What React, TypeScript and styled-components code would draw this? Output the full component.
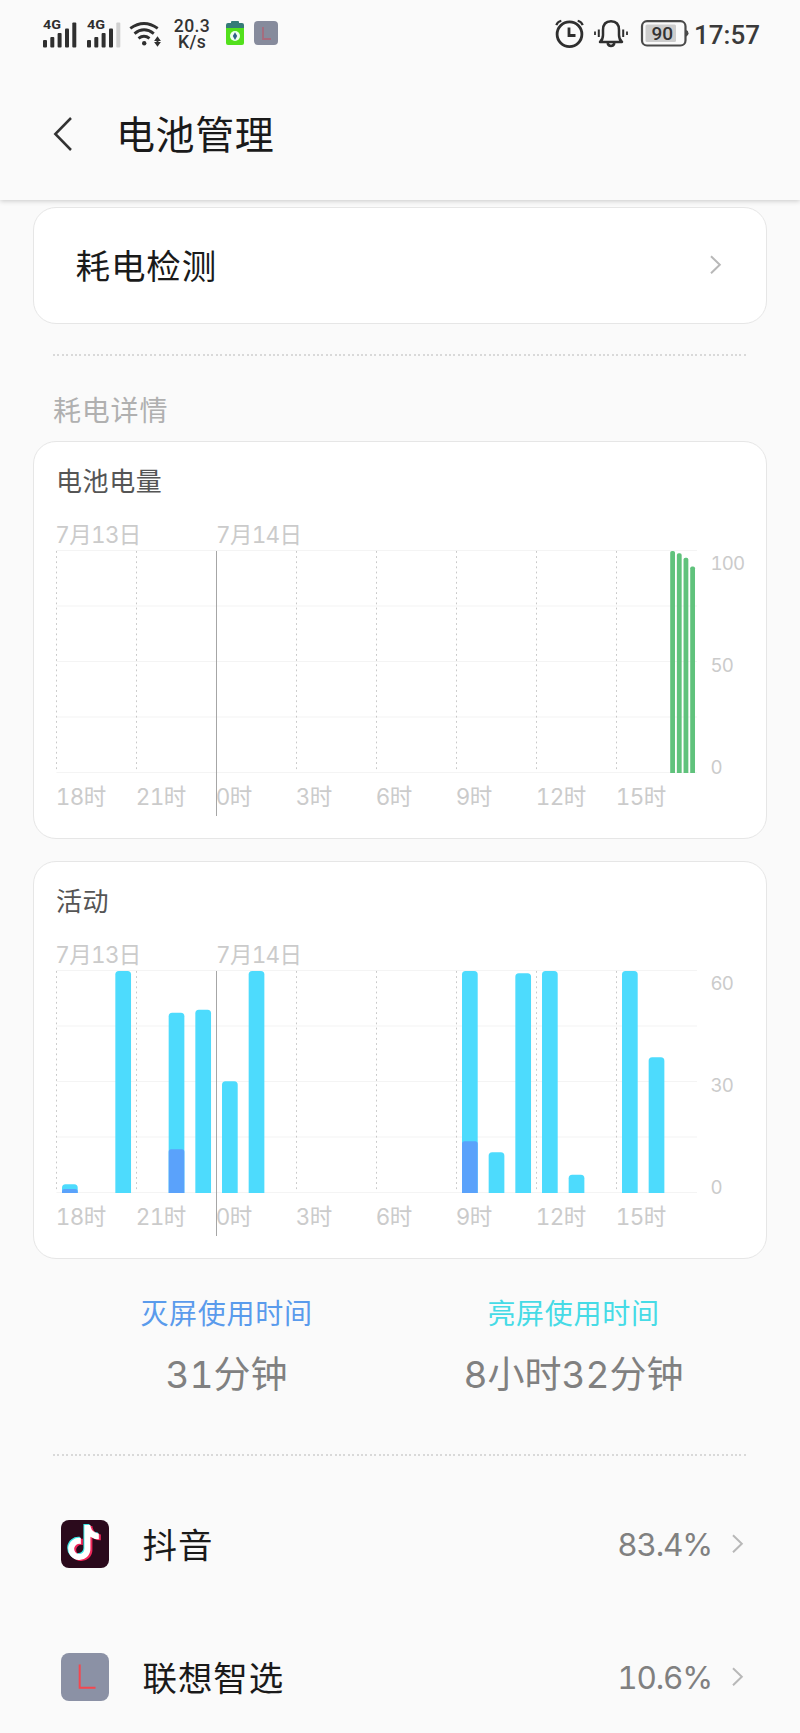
import React from 'react';
import styled, { createGlobalStyle, css } from 'styled-components';
import { FaTiktok } from 'react-icons/fa';

const GlobalStyle = createGlobalStyle`
  html, body { margin: 0; padding: 0; background: #fafafa; }
  * { box-sizing: border-box; }
  svg { display: block; flex: none; }
`;

const uiFont = css`
  font-family: Inter, 'Noto Sans CJK SC', sans-serif;
  font-feature-settings: 'tnum' 1;
`;

const Screen = styled.div`
  ${uiFont}
  width: 800px;
  height: 1733px;
  overflow: hidden;
  background: #fafafa;
  color: #1a1a1a;
`;

const TopArea = styled.header`
  height: 200px;
  background: #fafafa;
  box-shadow: 0 1px 5px rgba(0, 0, 0, 0.2);
`;

const StatusBar = styled.div`
  display: flex;
  align-items: flex-start;
  justify-content: space-between;
  height: 68px;
  padding: 0 40px 0 42px;
  font-family: Roboto, sans-serif;
  color: #333;
`;

const StatusGroup = styled.div`
  display: flex;
  align-items: flex-start;
`;

const NetSpeed = styled.div`
  display: flex;
  flex-direction: column;
  align-items: center;
  width: 40px;
  margin: 17.5px 13px 0 9px;
  font-size: 17.6px;
  font-weight: 500;
  line-height: 16.5px;
  letter-spacing: 0.4px;
`;

const Clock = styled.div`
  margin-top: 19.5px;
  font-size: 26px;
  font-weight: 500;
  line-height: 30px;
  color: #3a3a3a;
`;

const TitleBar = styled.div`
  display: flex;
  align-items: center;
  height: 132px;
  padding: 0 0 0 53px;
`;

const PageTitle = styled.h1`
  margin: 5px 0 3px 44px;
  font-size: 39px;
  font-weight: 400;
  line-height: 56px;
  letter-spacing: 0.6px;
`;

const BackIcon = styled.svg`
  margin-bottom: 1px;
`;

const Card = styled.section<{ $top: number; $height: number }>`
  width: 734px;
  height: ${(p) => p.$height}px;
  margin: ${(p) => p.$top}px 33px 0;
  background: #fff;
  border: 1px solid #e6e6e6;
  border-radius: 23px;
`;

const LinkCard = styled(Card)`
  display: flex;
  align-items: center;
  justify-content: space-between;
  padding: 0 44px 2px 41.5px;
`;

const LinkLabel = styled.span`
  padding-top: 4px;
  font-size: 34.5px;
  line-height: 48px;
  letter-spacing: 0.9px;
`;

const Divider = styled.div<{ $top: number }>`
  height: 2px;
  margin: ${(p) => p.$top}px 54px 0 53px;
  background: repeating-linear-gradient(90deg, #d9d9d9 0 2px, transparent 2px 4.4px);
`;

const SectionLabel = styled.h2`
  margin: 34px 0 0 53px;
  font-size: 28px;
  font-weight: 400;
  line-height: 42px;
  letter-spacing: 0.8px;
  color: #b0b0b0;
`;

const CardTitle = styled.h3`
  height: 78px;
  margin: 0;
  padding-left: 22px;
  font-size: 26px;
  font-weight: 400;
  line-height: 79px;
  letter-spacing: 0.6px;
  color: #555;
`;

const ChartSvg = styled.svg`
  ${uiFont}
  .label { font-size: 22.5px; fill: #cbcbcb; }
  .value { font-size: 18.7px; letter-spacing: -0.9px; fill: #cbcbcb; }
`;

const Usage = styled.section`
  display: flex;
  height: 195px;
  padding: 34px 53px 0;
`;

const UsageItem = styled.div`
  flex: 1;
  text-align: center;
`;

const UsageLabel = styled.div<{ $color: string }>`
  font-size: 28px;
  line-height: 42px;
  letter-spacing: 0.7px;
  color: ${(p) => p.$color};
`;

const UsageValue = styled.div`
  margin-top: 12px;
  font-size: 37px;
  line-height: 56px;
  color: #808080;
`;

const AppList = styled.section`
  padding-top: 21px;
`;

const AppRow = styled.div`
  display: flex;
  align-items: center;
  height: 133.3px;
  padding: 0 56px 0 60.5px;
`;

const AppIcon = styled.div<{ $bg: string }>`
  position: relative;
  width: 48px;
  height: 48px;
  border-radius: 8px;
  background: ${(p) => p.$bg};
  overflow: hidden;
`;

const NoteLayer = styled(FaTiktok)<{ $x: number; $y: number; $tint: string }>`
  position: absolute;
  left: ${(p) => p.$x}px;
  top: ${(p) => p.$y}px;
  width: 31px;
  height: 35px;
  color: ${(p) => p.$tint};
`;

const AppName = styled(LinkLabel)`
  flex: 1;
  margin-left: 34px;
`;

const Percent = styled.span`
  margin-right: 19px;
  padding-top: 3px;
  font-size: 31.5px;
  line-height: 44px;
  letter-spacing: -1.2px;
  color: #808080;
`;

const Chevron = () => (
  <svg width="13" height="22" viewBox="0 0 13 22" fill="none" stroke="#b8b8b8" strokeWidth="2">
    <path d="M2 2.2 L10.8 10.7 L2 19.2" />
  </svg>
);

const Signal = ({ weak }: { weak?: boolean }) => (
  <svg width="43.5" height="68" viewBox="0 0 43.5 68" fill="#2f2f2f">
    <text x="1" y="29" fontSize="12.5" fontWeight="700" textLength="18" lengthAdjust="spacingAndGlyphs">4G</text>
    <rect x="1" y="40" width="4" height="7.5" rx="1" />
    <rect x="8.3" y="37" width="4" height="10.5" rx="1" />
    <rect x="15.6" y="33" width="4" height="14.5" rx="1" />
    <rect x="23" y="28.5" width="4" height="19" rx="1" />
    <rect x="30.3" y="22.5" width="4" height="25" rx="1" fill={weak ? '#d0d0d0' : undefined} />
  </svg>
);

const Wifi = () => (
  <svg width="34" height="68" viewBox="128.5 0 34 68" fill="none" stroke="#2f2f2f" strokeWidth="2.9">
    <path d="M129.8 28.4 Q143.5 18.6 157.2 28.4" />
    <path d="M134 33.6 Q143.5 26 153.3 33.6" />
    <path d="M138 38.4 Q143.5 34.2 149 38.4" />
    <circle cx="143.7" cy="43.2" r="2.2" fill="#2f2f2f" stroke="none" />
    <path d="M153.6 40.9 L157 36.2 L160.4 40.9 Z M153.6 42 L157 46.7 L160.4 42 Z" fill="#2f2f2f" stroke="none" />
    <path d="M157 39 V44" strokeWidth="2" />
  </svg>
);

const BatterySaver = () => (
  <svg width="20" height="68" viewBox="0 0 20 68">
    <rect x="6" y="21" width="8" height="5" rx="1" fill="#347b77" />
    <rect x="1" y="23" width="18" height="8" rx="2" fill="#347b77" />
    <path d="M1 28 H19 V43 Q19 45 17 45 H3 Q1 45 1 43 Z" fill="#52e01c" />
    <circle cx="10" cy="36" r="5" fill="#eefff0" />
    <path d="M10 32.3 L7.8 36.1 L10 39.9 L12.2 36.1 Z" fill="#31608b" />
  </svg>
);

const LauncherMini = () => (
  <svg width="24" height="68" viewBox="0 0 24 68">
    <rect x="0" y="21" width="24" height="24" rx="4" fill="#868b9c" />
    <path d="M9 27 V39 H17" fill="none" stroke="#a86a7c" strokeWidth="1.8" />
  </svg>
);

const Alarm = () => (
  <svg width="30" height="68" viewBox="554 0 30 68" fill="none" stroke="#2f2f2f" strokeWidth="2.8">
    <circle cx="569.5" cy="34.3" r="12.4" />
    <path d="M569 27.5 V35.5 H575.5" />
    <path d="M556.3 25.2 Q557.5 21.7 561.3 20.8 M577.7 20.8 Q581.5 21.7 582.7 25.2" strokeWidth="2.2" />
  </svg>
);

const Bell = () => (
  <svg width="36" height="68" viewBox="593 0 36 68" fill="none" stroke="#2f2f2f" strokeWidth="2.5">
    <path d="M600 42 Q603 39.5 603 35 V30 Q603 21.2 611 21.2 Q619 21.2 619 30 V35 Q619 39.5 622 42 Z" strokeLinejoin="round" />
    <path d="M607.5 43 Q608.5 46 611 46 Q613.5 46 614.5 43" />
    <path d="M598.8 29.5 V37 M623.2 29.5 V37" strokeWidth="2" />
    <path d="M595 31.5 V35 M627 31.5 V35" strokeWidth="1.8" />
  </svg>
);

const Battery = () => (
  <svg width="49" height="68" viewBox="640 0 49 68">
    <rect x="642" y="21.2" width="43.5" height="24.3" rx="5" fill="none" stroke="#4a4a4a" strokeWidth="2.2" />
    <path d="M686 30 Q688.5 30.5 688.5 33.3 Q688.5 36 686 36.8 Z" fill="#4a4a4a" />
    <rect x="645.5" y="24.5" width="30.5" height="17.5" rx="1.5" fill="#cdcdcd" />
    <text x="651.5" y="40.3" fontSize="19" fontWeight="500" fill="#333">90</text>
  </svg>
);

/* Plot geometry, relative to the svg's top-left corner */
const LEFT = 22.5;
const RIGHT = 663;
const TOP = 31;
const BASE = 253;
const HOUR = 80 / 3;
const HOURS = ['18时', '21时', '0时', '3时', '6时', '9时', '12时', '15时'];

const barPath = (x: number, w: number, h: number, r: number) => {
  const rr = Math.min(r, h);
  const y = BASE - h;
  return `M${x} ${BASE} V${y + rr} Q${x} ${y} ${x + rr} ${y} H${x + w - rr} Q${x + w} ${y} ${x + w} ${y + rr} V${BASE} Z`;
};

const Chart = ({ scale, children }: { scale: string[]; children: React.ReactNode }) => (
  <ChartSvg width="732" height="317" viewBox="0 0 732 317">
    {[0, 1, 2, 3, 4].map((i) => (
      <line key={i} x1={LEFT} x2={RIGHT} y1={30.5 + i * 55.5} y2={30.5 + i * 55.5} stroke="#f4f4f4" strokeWidth="1.2" />
    ))}
    {HOURS.map((_, i) =>
      i === 2 ? null : (
        <line key={i} x1={LEFT + i * 80} x2={LEFT + i * 80} y1="31" y2="252" stroke="#c9c9c9" strokeDasharray="1.8 3.35" />
      ),
    )}
    <text className="label" x="21.3" y="22.7" textLength="86">7月13日</text>
    <text className="label" x="182" y="22.7" textLength="86">7月14日</text>
    {HOURS.map((h, i) => (
      <text key={h} className="label" x={LEFT - 0.8 + i * 80} y="285.2" textLength={h.length === 3 ? 50.5 : 36.5}>{h}</text>
    ))}
    {children}
    <line x1={LEFT + 160} x2={LEFT + 160} y1="31" y2="296" stroke="#a6a6a6" />
    {scale.map((s, i) => (
      <text key={s} className="value" x="676.5" y={49.9 + i * 102}>{s}</text>
    ))}
  </ChartSvg>
);

const LEVELS = [100, 99, 97, 93];

const ACTIVITY = [
  { hour: 0, on: 2.35, off: 1.1 },
  { hour: 2, on: 60 },
  { hour: 4, on: 48.7, off: 11.8 },
  { hour: 5, on: 49.5 },
  { hour: 6, on: 30.2 },
  { hour: 7, on: 60 },
  { hour: 15, on: 60, off: 14 },
  { hour: 16, on: 11 },
  { hour: 17, on: 59.4 },
  { hour: 18, on: 60 },
  { hour: 19, on: 4.9 },
  { hour: 21, on: 60 },
  { hour: 22, on: 36.7 },
];

const minutes = (m: number) => (m / 60) * (BASE - TOP);

export default function App() {
  return (
    <>
      <GlobalStyle />
      <Screen>
        <TopArea>
          <StatusBar>
            <StatusGroup>
              <Signal />
              <Signal weak />
              <Wifi />
              <NetSpeed>
                <span>20.3</span>
                <span>K/s</span>
              </NetSpeed>
              <BatterySaver />
              <svg width="9" height="1" />
              <LauncherMini />
            </StatusGroup>
            <StatusGroup>
              <Alarm />
              <svg width="9" height="1" />
              <Bell />
              <svg width="11" height="1" />
              <Battery />
              <svg width="5" height="1" />
              <Clock>17:57</Clock>
            </StatusGroup>
          </StatusBar>
          <TitleBar>
            <BackIcon width="19" height="36" viewBox="0 0 19 36" fill="none" stroke="#333" strokeWidth="2.5">
              <path d="M18 2 L2.3 18 L18 34" />
            </BackIcon>
            <PageTitle>电池管理</PageTitle>
          </TitleBar>
        </TopArea>

        <LinkCard $top={7} $height={117}>
          <LinkLabel>耗电检测</LinkLabel>
          <Chevron />
        </LinkCard>
        <Divider $top={30} />
        <SectionLabel>耗电详情</SectionLabel>

        <Card $top={9} $height={398}>
          <CardTitle>电池电量</CardTitle>
          <Chart scale={['100', '50', '0']}>
            {LEVELS.map((v, i) => (
              <path key={v} d={barPath(636.2 + i * 6.67, 4.8, (v / 100) * (BASE - TOP), 1.8)} fill="#60c27c" />
            ))}
          </Chart>
        </Card>

        <Card $top={22} $height={398}>
          <CardTitle>活动</CardTitle>
          <Chart scale={['60', '30', '0']}>
            {ACTIVITY.map(({ hour, on, off }) => {
              const x = LEFT + 5.5 + hour * HOUR;
              return (
                <g key={hour}>
                  <path d={barPath(x, 15.7, minutes(on), 3.5)} fill="#4ddbfd" />
                  {off && <path d={barPath(x, 15.7, minutes(off), 2.5)} fill="#5aa2fb" />}
                </g>
              );
            })}
          </Chart>
        </Card>

        <Usage>
          <UsageItem>
            <UsageLabel $color="#5a9bec">灭屏使用时间</UsageLabel>
            <UsageValue>31分钟</UsageValue>
          </UsageItem>
          <UsageItem>
            <UsageLabel $color="#46dbe6">亮屏使用时间</UsageLabel>
            <UsageValue>8小时32分钟</UsageValue>
          </UsageItem>
        </Usage>
        <Divider $top={0} />

        <AppList>
          <AppRow>
            <AppIcon $bg="#2b0a1c">
              <NoteLayer $x={6.2} $y={4.4} $tint="#3de8e6" />
              <NoteLayer $x={9.2} $y={6.6} $tint="#f0285a" />
              <NoteLayer $x={7.6} $y={5.5} $tint="#fff" />
            </AppIcon>
            <AppName>抖音</AppName>
            <Percent>83.4%</Percent>
            <Chevron />
          </AppRow>
          <AppRow>
            <AppIcon $bg="#8b91a5">
              <svg width="48" height="48" viewBox="0 0 48 48" fill="none" stroke="#f4474f" strokeWidth="2">
                <path d="M18.7 11.5 V34.8 H34.5" />
              </svg>
            </AppIcon>
            <AppName>联想智选</AppName>
            <Percent>10.6%</Percent>
            <Chevron />
          </AppRow>
        </AppList>
      </Screen>
    </>
  );
}
